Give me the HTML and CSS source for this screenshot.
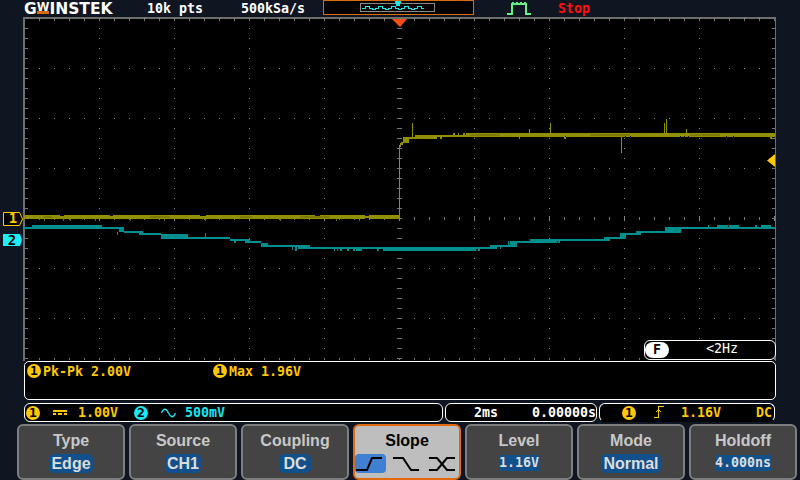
FILE: index.html
```html
<!DOCTYPE html>
<html lang="en">
<head>
  <meta charset="UTF-8">
  <title>GW Instek scope</title>
  <link rel="stylesheet" href="styles.css">
</head>
<body>
  <div class="scope">
    <div class="topbar">
      <div class="logo">G<span class="logo-w">W</span>INSTEK</div>
      <span class="info pts">10k pts</span>
      <span class="info rate">500kSa/s</span>
      <svg class="minimap" width="151" height="16" viewBox="0 0 151 16" shape-rendering="crispEdges">
        <rect x="0.5" y="0.5" width="150" height="14" fill="#000" stroke="#d86c10"/>
        <rect x="37.500" y="3.500" width="74" height="8" fill="#000" stroke="#8a8a8a"/>
        <path d="M39 8h3V6h4v2h3v1h3V8h3V6h4v2h3v1h3V8h3V6h4v2h3v1h3V8h3V6h4v2h3v1h3V8h3V6h4v2h3" fill="none" stroke="#19e6f0"/>
        <path d="M72 1h6v2h-1v3h-4V3h-1z" fill="#19e6f0"/>
      </svg>
      <svg class="run-icon" width="24" height="16" viewBox="0 0 24 16" shape-rendering="crispEdges">
        <path d="M0 13h4V3h16v10h4v2h-6V5H6v10H0z" fill="#66ee88"/>
        <path d="M5 2h2v1H5zM9 2h2v1H9zM13 2h2v1h-2zM17 2h2v1h-2z" fill="#66ee88"/>
      </svg>
      <span class="stop">Stop</span>
    </div>

    <div class="plot">
      <svg class="plot-svg" width="800" height="344" viewBox="0 17 800 344" shape-rendering="crispEdges">
        <defs>
          <pattern id="dots-v" x="24" y="18" width="75" height="10" patternUnits="userSpaceOnUse">
            <rect width="1" height="1" fill="#8a8a8a"/>
          </pattern>
          <pattern id="dots-h" x="24" y="18" width="15" height="50" patternUnits="userSpaceOnUse">
            <rect width="1" height="1" fill="#8a8a8a"/>
          </pattern>
          <pattern id="ticks-15" x="24" y="0" width="15" height="400" patternUnits="userSpaceOnUse">
            <rect width="1" height="400" fill="#777"/>
          </pattern>
          <pattern id="ticks-75" x="24" y="0" width="75" height="400" patternUnits="userSpaceOnUse">
            <rect width="1" height="400" fill="#888"/>
          </pattern>
          <pattern id="ticks-10" x="0" y="18" width="800" height="10" patternUnits="userSpaceOnUse">
            <rect width="800" height="1" fill="#777"/>
          </pattern>
        </defs>

        <!-- frame -->
        <rect x="24" y="18" width="752" height="343" fill="#000"/>
        <path d="M23 17h753v344h-1V19H25v342h-2z" fill="#6e6e6e"/>

        <!-- graticule -->
        <rect x="25" y="18" width="750" height="343" fill="url(#dots-v)"/>
        <rect x="25" y="18" width="750" height="343" fill="url(#dots-h)"/>
        <rect x="25" y="19" width="750" height="2" fill="url(#ticks-15)"/>
        <rect x="25" y="358" width="750" height="2" fill="url(#ticks-15)"/>
        <rect x="25" y="217" width="750" height="3" fill="url(#ticks-15)"/>
        <rect x="25" y="216" width="750" height="5" fill="url(#ticks-75)"/>
        <rect x="25" y="18" width="3" height="343" fill="url(#ticks-10)"/>
        <rect x="772" y="18" width="3" height="343" fill="url(#ticks-10)"/>
        <rect x="397" y="18" width="5" height="343" fill="url(#ticks-10)"/>

        <!-- ch1 -->
        <path class="ch1" d="M24 215h375v4H24zM399 145h1v74h-1zM400 143h1v4h-1zM401 142h2v3h-2zM403 137h6v6h-6zM409 137h6v2h-6zM415 135h22v4h-22zM437 135h29v2h-29zM466 133h309v4H466z"/>
        <path class="ch1" d="M412 123h1v14h-1zM529 129h1v4h-1zM550 123h1v10h-1zM621 137h1v16h-1zM664 123h1v10h-1zM666 119h1v14h-1zM686 129h1v4h-1zM519 137h1v2h-1zM564 137h2v2h-2zM440 137h2v2h-2zM453 133h2v2h-2zM458 133h1v2h-1zM463 133h2v2h-2zM770 137h2v2h-2z"/>
        <path class="ch1-tick" d="M44 219h1v2h-1zM63 219h1v2h-1zM70 219h1v2h-1zM95 219h1v2h-1zM130 219h1v2h-1zM164 219h1v2h-1zM205 219h1v2h-1zM280 219h1v2h-1zM336 219h1v2h-1zM359 219h1v2h-1z"/>
        <path class="ch1-dim" d="M44 216h8v2h-8zM150 216h20v2h-20zM240 216h12v2h-12zM300 216h30v2h-30zM470 134h30v2h-30zM590 134h40v2h-40zM690 134h30v2h-30z"/>
        <path class="notch" d="M60 215h4v1h-4zM110 215h3v1h-3zM200 215h6v1h-6zM365 215h4v1h-4zM365 218h4v1h-4zM315 215h5v1h-5zM565 136h1v1h-1zM625 136h1v1h-1zM630 136h1v1h-1zM680 136h1v1h-1zM684 136h1v1h-1zM688 136h1v1h-1zM726 136h1v1h-1zM733 136h1v1h-1z"/>

        <!-- ch2 -->
        <path class="ch2" d="M24 227h8v2h-8zM32 225h70v4H32zM102 227h18v2h-18zM119 227h5v5h-5zM124 231h19v2h-19zM139 233h22v2h-22zM161 234h27v5h-27zM188 237h42v2h-42zM230 239h20v2h-20zM245 240h5v3h-5zM250 241h11v2h-11zM261 243h7v4h-7zM268 245h42v2h-42zM298 247h199v2H298zM383 247h93v4h-93zM490 245h27v2h-27zM510 241h7v6h-7zM512 241h28v2h-28zM530 239h10v4h-10zM531 239h79v2h-79zM530 241h27v2h-27zM604 237h6v4h-6zM604 237h22v2h-22zM620 233h6v6h-6zM626 233h15v2h-15zM636 231h5v4h-5zM641 231h24v2h-24zM665 227h16v6h-16zM665 227h110v2H665zM717 225h11v2h-11zM729 225h10v2h-10zM755 225h2v2h-2zM761 225h10v2h-10z"/>
        <path class="ch2" d="M117 232h1v3h-1zM205 233h1v4h-1zM234 241h2v2h-2zM292 247h1v3h-1zM295 247h2v4h-2zM334 249h1v2h-1zM337 249h1v2h-1zM340 249h2v2h-2zM347 249h2v2h-2zM353 249h2v2h-2zM356 249h6v2h-6zM377 249h2v2h-2zM478 249h2v2h-2zM500 247h1v2h-1zM508 241h1v4h-1zM558 241h2v2h-2zM708 225h1v2h-1zM775 242h1v1h-1z"/>

        <!-- trigger position -->
        <path class="trig-pos" d="M392 19h15l-7 8z" shape-rendering="auto"/>

        <!-- trigger level -->
        <path class="trig-level" d="M775 154v13l-8-6.500z" shape-rendering="auto"/>

        <!-- channel tags -->
        <path class="tag-1" d="M3.500 212.500h16l3 6.500-3 6.500h-16z" shape-rendering="auto"/>
        <text class="tag-text tag-text-1" x="13" y="223">1</text>
        <path class="tag-2" d="M3 234h17l2 6-2 6H3z" shape-rendering="auto"/>
        <text class="tag-text tag-text-2" x="12" y="245">2</text>
      </svg>

      <div class="freq">
        <span class="freq-f">F</span>
        <span class="freq-val">&lt;2Hz</span>
      </div>
    </div>

    <div class="measure">
      <div class="meas-item meas-pk"><span class="dot">1</span>Pk-Pk 2.00V</div>
      <div class="meas-item meas-max"><span class="dot">1</span>Max 1.96V</div>
    </div>

    <div class="status">
      <div class="seg seg-chan">
        <span class="dot dot-a">1</span>
        <svg class="cpl-dc" width="14" height="5" viewBox="0 0 14 5" shape-rendering="crispEdges">
          <path d="M0 0h14v2H0zM0 3h3v2H0zM5 3h4v2H5zM11 3h3v2h-3z" fill="#ffc800"/>
        </svg>
        <span class="yel val-1">1.00V</span>
        <span class="dot dot-b">2</span>
        <svg class="cpl-ac" width="15" height="10" viewBox="0 0 15 10">
          <path d="M0.500 5C2.500 0 5 0 7.500 5S12.500 10 14.500 5" fill="none" stroke="#19e6f0" stroke-width="1.300"/>
        </svg>
        <span class="cyan">500mV</span>
      </div>
      <div class="seg seg-time">
        <span class="tdiv">2ms</span>
        <span>0.00000s</span>
      </div>
      <div class="seg seg-trig">
        <span class="dot dot-c">1</span>
        <svg class="edge" width="10" height="13" viewBox="0 0 10 13" shape-rendering="crispEdges">
          <path d="M0 11h4V0h6v1H5v11H0zM3 4h1v1H3zM5 4h1v1H5zM2 5h1v1H2zM6 5h1v1H6z" fill="#ffc800"/>
        </svg>
        <span class="yel trig-v">1.16V</span>
        <span class="yel trig-c">DC</span>
      </div>
    </div>

    <div class="keys">
      <div class="key"><div class="key-label">Type</div><div class="pill">Edge</div></div>
      <div class="key"><div class="key-label">Source</div><div class="pill">CH1</div></div>
      <div class="key"><div class="key-label">Coupling</div><div class="pill">DC</div></div>
      <div class="key key-on">
        <div class="key-label">Slope</div>
        <div class="slopes">
          <svg width="106" height="20" viewBox="0 0 106 20">
            <rect x="1" y="0" width="31" height="19" rx="4" fill="#4080d0"/>
            <g fill="none" stroke="#000" stroke-width="2">
              <path d="M2 16h11l5-12h10"/>
              <path d="M39 4h10l8 12h8"/>
              <path d="M75 4h8l10 12h8M75 16h8l10-12h8"/>
            </g>
          </svg>
        </div>
      </div>
      <div class="key"><div class="key-label">Level</div><div class="pill pill-mono">1.16V</div></div>
      <div class="key"><div class="key-label">Mode</div><div class="pill">Normal</div></div>
      <div class="key"><div class="key-label">Holdoff</div><div class="pill pill-mono">4.000ns</div></div>
    </div>
  </div>
</body>
</html>
```

FILE: styles.css
```css
html, body {
  margin: 0;
  background: #0f1622;
}
.scope {
  width: 800px;
  height: 480px;
  overflow: hidden;
  display: flex;
  flex-direction: column;
  font-family: "DejaVu Sans Mono", monospace;
  font-size: 13.3px;
  color: #fff;
}

/* top bar */
.topbar {
  height: 17px;
  display: flex;
  align-items: center;
  padding-left: 24px;
}
.logo {
  width: 90px;
  align-self: flex-start;
  font-family: "DejaVu Sans", sans-serif;
  font-weight: 700;
  font-size: 15.5px;
  line-height: 18px;
  white-space: nowrap;
}
.logo-w {
  display: inline-block;
  font-size: 11.5px;
  line-height: 8px;
  height: 8px;
  vertical-align: 3px;
  border-bottom: 3px solid #d86c10;
}
.info {
  line-height: 17px;
  font-weight: 700;
}
.pts { margin-left: 33px; }
.rate { margin-left: 38px; }
.minimap {
  margin-left: 18px;
  flex: none;
  align-self: flex-start;
}
.run-icon {
  margin-left: 33px;
  flex: none;
  align-self: flex-start;
}
.stop {
  margin-left: 27px;
  color: #ff1010;
  font-weight: 700;
}

/* plot */
.plot {
  position: relative;
  height: 344px;
}
.plot-svg { display: block; }
.ch1 { fill: #909000; }
.ch1-tick { fill: #6a6a1c; }
.ch1-dim { fill: #7c7c00; }
.ch2 { fill: #008f8f; }
.notch { fill: #000; }
.trig-pos { fill: #ff5010; }
.trig-level { fill: #ffc800; }
.tag-1 { fill: #000; stroke: #ffc800; }
.tag-2 { fill: #19f0ff; }
.tag-text {
  font-family: "DejaVu Sans Mono", monospace;
  font-size: 14px;
  font-weight: 700;
  text-anchor: middle;
}
.tag-text-1 { fill: #ffc800; }
.tag-text-2 { fill: #000; }

.freq {
  position: absolute;
  left: 644px;
  top: 323px;
  width: 130px;
  height: 18px;
  border: 1px solid #fff;
  border-radius: 6px;
  background: #000;
  display: flex;
  align-items: center;
  line-height: 16px;
}
.freq-f {
  width: 24px;
  height: 16px;
  border-radius: 8px;
  background: #fff;
  color: #000;
  font-weight: 700;
  text-align: center;
}
.freq-val { margin: -2px 0 0 37px; }

/* measurements */
.measure {
  margin-left: 24px;
  width: 750px;
  height: 36px;
  border: 1px solid #fff;
  border-radius: 5px;
  background: #000;
  display: flex;
  padding-top: 2px;
  color: #ffc800;
  font-weight: 700;
}
.meas-item {
  display: flex;
  align-items: flex-start;
  line-height: 15px;
}
.meas-pk {
  margin-left: 2px;
  width: 186px;
}
.dot {
  width: 14px;
  height: 14px;
  flex: none;
  border-radius: 50%;
  background: #ffc800;
  color: #000;
  font-size: 13px;
  line-height: 14px;
  text-align: center;
  font-weight: 700;
  margin-right: 2px;
}

/* status row */
.status {
  margin: 3px 0 0 24px;
  height: 18px;
  display: flex;
  gap: 2px;
  font-weight: 700;
}
.seg {
  height: 17px;
  border: 1px solid #fff;
  border-radius: 6px;
  background: #000;
  display: flex;
  align-items: center;
}
.seg-chan { width: 417px; }
.seg-time { width: 150px; }
.seg-trig {
  width: 174px;
  border-bottom-color: transparent;
}
.yel { color: #ffc800; }
.cyan { color: #19e6f0; margin-left: 9px; }
.dot-a { margin: 0 0 0 1px; }
.cpl-dc { margin-left: 13px; }
.val-1 { margin-left: 11px; }
.dot-b {
  margin: 0 0 0 16px;
  background: #19e6f0;
}
.cpl-ac { margin-left: 13px; }
.tdiv { margin: 0 34px 0 28px; }
.dot-c { margin: 0 0 0 22px; }
.edge { margin-left: 18px; }
.trig-v { margin-left: 17px; }
.trig-c { margin-left: 35px; }

/* soft keys */
.keys {
  margin: 3px 0 0 17px;
  display: flex;
  gap: 4px;
}
.key {
  width: 108px;
  height: 56px;
  box-sizing: border-box;
  border: 2px solid #7e7e7e;
  border-radius: 6px;
  background: #444;
  display: flex;
  flex-direction: column;
  align-items: center;
  font-family: "Liberation Sans", sans-serif;
  font-weight: 700;
  font-size: 16px;
  color: #c8c8c8;
}
.key-label {
  line-height: 20px;
  margin-top: 5px;
}
.pill {
  margin-top: 3px;
  padding: 0 2px;
  height: 19px;
  line-height: 19px;
  border-radius: 5px;
  background: #12508c;
  color: #dcdcdc;
  min-width: 28px;
  text-align: center;
}
.pill-mono {
  margin-top: 4px;
  height: 16px;
  line-height: 16px;
  padding: 0;
  border-radius: 0;
  font-family: "DejaVu Sans Mono", monospace;
  font-size: 13.3px;
}
.key-on {
  background: #bebebe;
  border-color: #e06a10;
  color: #000;
}
.slopes {
  margin-top: 3px;
  height: 20px;
}
.slopes svg { display: block; }
```
